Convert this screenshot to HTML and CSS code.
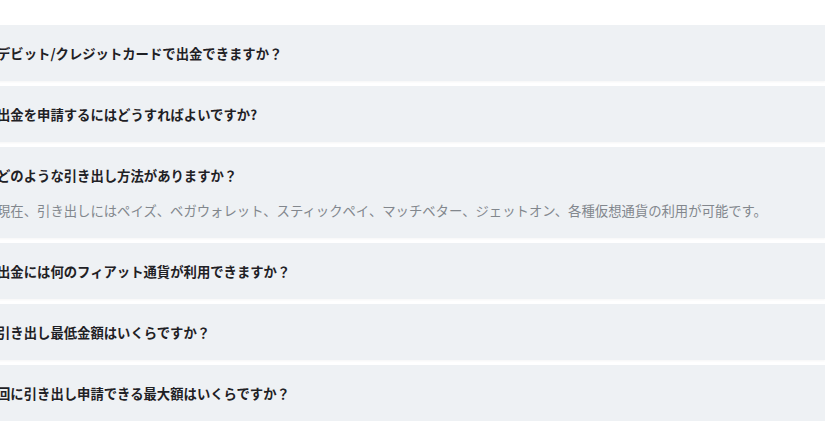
FILE: index.html
```html
<!DOCTYPE html>
<html lang="ja">
<head>
<meta charset="utf-8">
<title>FAQ</title>
<link rel="stylesheet" href="styles.css">
</head>
<body>
<div class="faq">
  <div class="item"><div class="q">デビット/クレジットカードで出金できますか？</div></div>
  <div class="item"><div class="q">出金を申請するにはどうすればよいですか?</div></div>
  <div class="item open">
    <div class="q">どのような引き出し方法がありますか？</div>
    <div class="a">現在、引き出しにはペイズ、ベガウォレット、スティックペイ、マッチベター、ジェットオン、各種仮想通貨の利用が可能です。</div>
  </div>
  <div class="item"><div class="q">出金には何のフィアット通貨が利用できますか？</div></div>
  <div class="item"><div class="q">引き出し最低金額はいくらですか？</div></div>
  <div class="item"><div class="q">回に引き出し申請できる最大額はいくらですか？</div></div>
</div>
</body>
</html>
```

FILE: styles.css
```css
html, body {
  margin: 0;
  padding: 0;
  background: #ffffff;
}
body {
  font-family: "Noto Sans CJK JP", "Noto Sans", sans-serif;
  overflow: hidden;
}
.faq {
  margin-left: -23px;
  padding-top: 25px;
  display: flex;
  flex-direction: column;
  gap: 5px;
}
.item {
  background: #eef1f4;
  padding: 18px 20px 17px 20px;
  box-shadow: 0 1px 2px rgba(0, 0, 0, 0.04);
}
.q {
  font-size: 13.35px;
  line-height: 21px;
  font-weight: 700;
  color: #1f2125;
  white-space: nowrap;
}
.a {
  margin-top: 15px;
  font-size: 13.35px;
  line-height: 20px;
  color: #82878d;
  white-space: nowrap;
}
```
